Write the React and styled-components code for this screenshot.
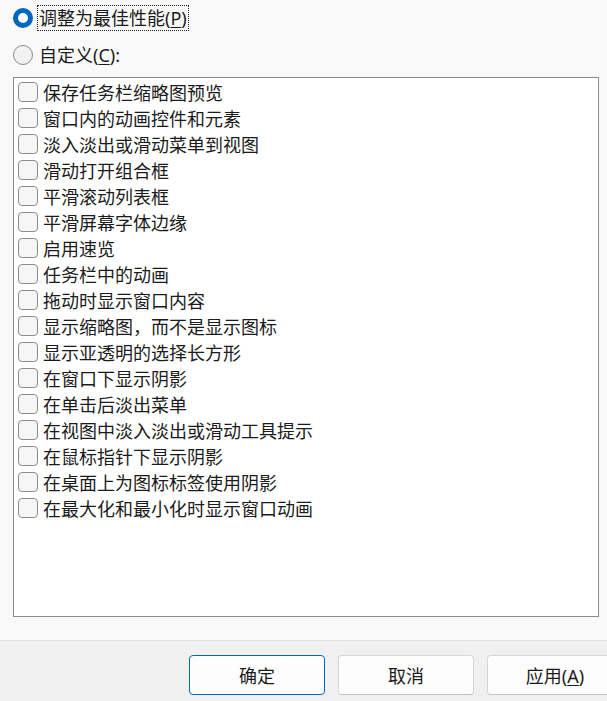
import React from 'react';
import styled, { createGlobalStyle } from 'styled-components';

const GlobalStyle = createGlobalStyle`
  html, body {
    margin: 0;
    padding: 0;
    background: #f9f9f9;
    overflow: hidden;
  }
  body {
    font-family: "Noto Sans", "Noto Sans CJK SC", sans-serif;
    font-size: 18px;
    color: #1b1b1b;
  }
`;

const Dialog = styled.div`
  width: 607px;
  height: 701px;
  display: flex;
  flex-direction: column;
`;

const Body = styled.div`
  flex: 1;
  display: flex;
  flex-direction: column;
  padding: 5px 8px 0 13px;
`;

const RadioRow = styled.label`
  display: flex;
  align-items: center;
  gap: 4px;
  height: 26px;
  margin-bottom: ${p => p.$mb || 0}px;
`;

const Radio = styled.span`
  box-sizing: border-box;
  width: 20px;
  height: 20px;
  min-width: 20px;
  border-radius: 50%;
  flex-shrink: 0;
  border: ${p => (p.$checked ? '5.5px solid #0067c0' : '1px solid #8a8a8a')};
  background: ${p => (p.$checked ? '#ffffff' : '#f2f2f2')};
`;

const RadioText = styled.span`
  box-sizing: border-box;
  height: 26px;
  line-height: 24px;
  padding: 0 1px;
  border: 1px dotted ${p => (p.$focus ? '#222' : 'transparent')};
  white-space: nowrap;
`;

const Key = styled.span`
  text-decoration: underline;
  text-underline-offset: 2px;
`;

const ListBox = styled.div`
  box-sizing: border-box;
  width: 586px;
  height: 540px;
  margin-top: 9px;
  background: #ffffff;
  border: 1px solid #8a8a90;
  padding: 1px 4px;
  display: flex;
  flex-direction: column;
`;

const CheckRow = styled.label`
  display: flex;
  align-items: center;
  gap: 5px;
  height: 26px;
  white-space: nowrap;
`;

const CheckBox = styled.span`
  box-sizing: border-box;
  width: 20px;
  height: 20px;
  flex-shrink: 0;
  border: 1px solid #8b8b8b;
  border-radius: 4px;
  background: #f6f6f6;
`;

const Footer = styled.div`
  box-sizing: border-box;
  height: 61px;
  flex-shrink: 0;
  border-top: 1px solid #e3e3e3;
  background: #f0f0f0;
  display: flex;
  align-items: flex-start;
  gap: 13px;
  padding: 14px 0 0 189px;
  overflow: hidden;
`;

const Button = styled.button`
  box-sizing: border-box;
  width: 136px;
  height: 40px;
  flex-shrink: 0;
  border-radius: 4px;
  font-family: inherit;
  font-size: 18px;
  color: #1b1b1b;
  background: #fdfdfd;
  border: 1px solid ${p => (p.$primary ? '#0067c0' : '#d6d6d6')};
  border-bottom-color: ${p => (p.$primary ? '#0067c0' : '#c4c4c4')};
  padding: 0;
`;

const options = [
  '保存任务栏缩略图预览',
  '窗口内的动画控件和元素',
  '淡入淡出或滑动菜单到视图',
  '滑动打开组合框',
  '平滑滚动列表框',
  '平滑屏幕字体边缘',
  '启用速览',
  '任务栏中的动画',
  '拖动时显示窗口内容',
  '显示缩略图，而不是显示图标',
  '显示亚透明的选择长方形',
  '在窗口下显示阴影',
  '在单击后淡出菜单',
  '在视图中淡入淡出或滑动工具提示',
  '在鼠标指针下显示阴影',
  '在桌面上为图标标签使用阴影',
  '在最大化和最小化时显示窗口动画',
];

const App = () => {
  return (
    <Dialog>
      <GlobalStyle />
      <Body>
        <RadioRow $mb={11}>
          <Radio $checked />
          <RadioText $focus>
            调整为最佳性能(<Key>P</Key>)
          </RadioText>
        </RadioRow>
        <RadioRow>
          <Radio />
          <RadioText>
            自定义(<Key>C</Key>):
          </RadioText>
        </RadioRow>
        <ListBox>
          {options.map(text => (
            <CheckRow key={text}>
              <CheckBox />
              <span>{text}</span>
            </CheckRow>
          ))}
        </ListBox>
      </Body>
      <Footer>
        <Button $primary>确定</Button>
        <Button>取消</Button>
        <Button>
          应用(<Key>A</Key>)
        </Button>
      </Footer>
    </Dialog>
  );
};

export default App;
